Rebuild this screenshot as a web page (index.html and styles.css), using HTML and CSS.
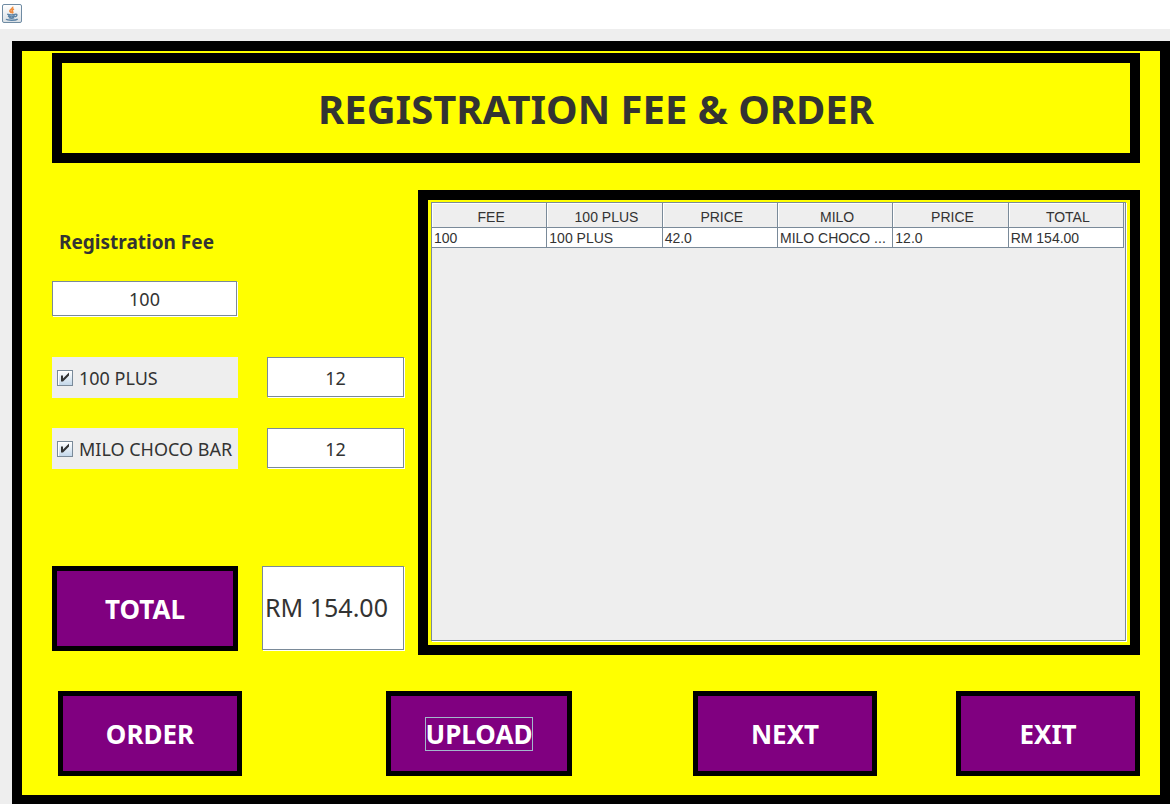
FILE: index.html
```html
<!DOCTYPE html>
<html lang="en">
<head>
<meta charset="utf-8">
<title>Registration Fee &amp; Order</title>
<link rel="stylesheet" href="styles.css">
</head>
<body>
<div class="titlebar">
  <svg class="java-icon" viewBox="0 0 20 20" aria-hidden="true">
    <defs><linearGradient id="tile" x1="0" y1="0" x2="0" y2="1"><stop offset="0" stop-color="#fff"/><stop offset="1" stop-color="#d9dfe4"/></linearGradient></defs>
    <rect x=".5" y=".5" width="19" height="18" rx="1.5" fill="url(#tile)" stroke="#6f8ba3"/>
    <path d="M10.500 2.800c1.200 2-3 2.400-2.600 4.200.2.900 1.200 1.200 1.400 2.200M12 5c-2.200.9-2.400 2-1.300 3 .3.500.1.900-.4 1.300" fill="none" stroke="#ee8b3f" stroke-width="1.700"/>
    <path d="M5.200 10.200c2 .8 6.300.8 8.300 0M6 12c1.800.9 5.200.9 7 0M6.800 13.700c1.500.7 4 .7 5.500 0M13.300 10.200c2.500-.5 2 2.300-.3 2.600M4 15.300c1.800 1.300 9.500 1.300 11.700-.2" fill="none" stroke="#5c83a6" stroke-width="1.400"/>
  </svg>
</div>
<main class="frame">
  <header class="banner"><h1 class="banner-title">REGISTRATION FEE &amp; ORDER</h1></header>
  <div class="content">
    <form class="order-form">
      <label class="fee-label" for="fee">Registration Fee</label>
      <input class="field fee-field" id="fee" type="text" value="100">
      <div class="item-row">
        <label class="option"><input class="tick" type="checkbox" checked>100 PLUS</label>
        <input class="field qty-field" type="text" value="12" aria-label="100 PLUS quantity">
      </div>
      <div class="item-row">
        <label class="option"><input class="tick" type="checkbox" checked>MILO CHOCO BAR</label>
        <input class="field qty-field" type="text" value="12" aria-label="Milo Choco Bar quantity">
      </div>
      <div class="item-row total-row">
        <button class="action" type="button"><span class="caption">TOTAL</span></button>
        <input class="field total-field" type="text" value="RM 154.00" aria-label="Total">
      </div>
    </form>
    <section class="orders">
      <div class="scrollpane">
        <table class="order-table">
          <thead><tr><th>FEE</th><th>100 PLUS</th><th>PRICE</th><th>MILO</th><th>PRICE</th><th>TOTAL</th></tr></thead>
          <tbody><tr><td>100</td><td>100 PLUS</td><td>42.0</td><td>MILO CHOCO ...</td><td>12.0</td><td>RM 154.00</td></tr></tbody>
        </table>
      </div>
    </section>
  </div>
  <nav class="actions">
    <button class="action" type="button"><span class="caption">ORDER</span></button>
    <button class="action action-wide" type="button"><span class="caption caption-focus">UPLOAD</span></button>
    <button class="action" type="button"><span class="caption">NEXT</span></button>
    <button class="action" type="button"><span class="caption">EXIT</span></button>
  </nav>
</main>
</body>
</html>
```
FILE: styles.css
```css
* { box-sizing: border-box; }

body {
  margin: 0;
  min-height: 100vh;
  display: flex;
  flex-direction: column;
  background: #eee;
  color: #333;
  font-family: "Noto Sans", sans-serif;
}

.titlebar {
  height: 29px;
  padding: 4px 2px;
  background: #fff;
}

.java-icon {
  display: block;
  width: 20px;
  height: 20px;
}

.frame {
  flex: 1;
  display: flex;
  flex-direction: column;
  margin: 12px 0 0 12px;
  padding: 2px 20px 19px 30px;
  border: 10px solid #000;
  border-bottom-width: 9px;
  background: #ff0;
}

.banner {
  height: 110px;
  display: flex;
  align-items: center;
  justify-content: center;
  padding-top: 2px;
  border: 10px solid #000;
}

.banner-title {
  margin: 0;
  font-size: 40px;
  line-height: 48px;
  font-weight: 700;
}

.content {
  flex: 1;
  display: grid;
  grid-template-columns: 353px 1fr;
  gap: 13px;
  margin-top: 27px;
}

.order-form {
  display: flex;
  flex-direction: column;
  padding: 40px 0 4px;
}

.fee-label {
  margin: 0 0 27px 7px;
  font-size: 19px;
  line-height: 24px;
  font-weight: 700;
}

.field {
  margin: 0 1px 1px 0;
  padding: 0 2px;
  border: 1px solid #7a8a99;
  border-radius: 0;
  outline: 0;
  background: #fff;
  box-shadow: 1px 1px 0 #fff;
  color: #333;
  font-family: inherit;
  font-size: 18px;
  text-align: center;
}

.fee-field {
  width: 185px;
  height: 35px;
  margin-bottom: 41px;
}

.item-row {
  display: flex;
  justify-content: space-between;
  margin-bottom: 30px;
}

.option {
  width: 186px;
  height: 41px;
  display: flex;
  align-items: center;
  gap: 6px;
  padding-left: 5px;
  background: #eee;
  font-size: 18px;
  white-space: nowrap;
}

.tick {
  appearance: none;
  flex: none;
  width: 16px;
  height: 16px;
  margin: 0;
  border: 1px solid #7a8a99;
  background: linear-gradient(#fff, #c4d8ea);
  box-shadow: inset 1px 1px 0 #fff;
}

.tick:checked::after {
  content: "";
  display: block;
  width: 14px;
  height: 14px;
  background: #333;
  clip-path: polygon(3px 5px, 5px 5px, 5px 8px, 11px 2px, 11px 5px, 5px 11px, 3px 11px);
}

.qty-field {
  width: 137px;
  height: 40px;
  padding-top: 2px;
}

.total-row {
  margin: auto 0 0;
}

.total-field {
  width: 142px;
  height: 84px;
  padding-bottom: 2px;
  font-size: 25px;
  text-align: left;
}

.orders {
  display: flex;
  padding: 2px 4px 4px 3px;
  border: 10px solid #000;
}

.scrollpane {
  flex: 1;
  padding-right: 1px;
  border: 1px solid #7a8a99;
  background: #eee;
  box-shadow: 1px 1px 0 #fff;
}

.order-table {
  width: 100%;
  table-layout: fixed;
  border-collapse: separate;
  border-spacing: 0;
  font-family: "Liberation Sans", Arial, sans-serif;
  font-size: 14px;
  white-space: nowrap;
}

.order-table th {
  height: 25px;
  padding: 3px 0 0 4px;
  border: solid #7a8a99;
  border-width: 0 1px 1px 0;
  box-shadow: inset 1px 1px 0 #fff;
  font-weight: 400;
  line-height: 20px;
}

.order-table td {
  height: 20px;
  padding: 2px 0 0 2px;
  border: solid #7a8a99;
  border-width: 0 1px 1px 0;
  background: #fff;
  line-height: 17px;
}

.actions {
  display: grid;
  grid-template-columns: 328fr 307fr 263fr 184px;
  margin-top: 36px;
  padding-left: 6px;
}

.action {
  width: 186px;
  height: 85px;
  padding: 0;
  border: 5px solid #000;
  border-radius: 0;
  background: #800080;
  color: #fff;
  font-family: inherit;
  font-size: 26px;
  font-weight: 700;
}

.actions .action {
  width: 184px;
}

.actions .action-wide {
  width: 186px;
}

.caption {
  display: inline-block;
  border: 1px solid transparent;
  line-height: 32px;
}

.caption-focus {
  border-color: #a3b8cc;
}
```
